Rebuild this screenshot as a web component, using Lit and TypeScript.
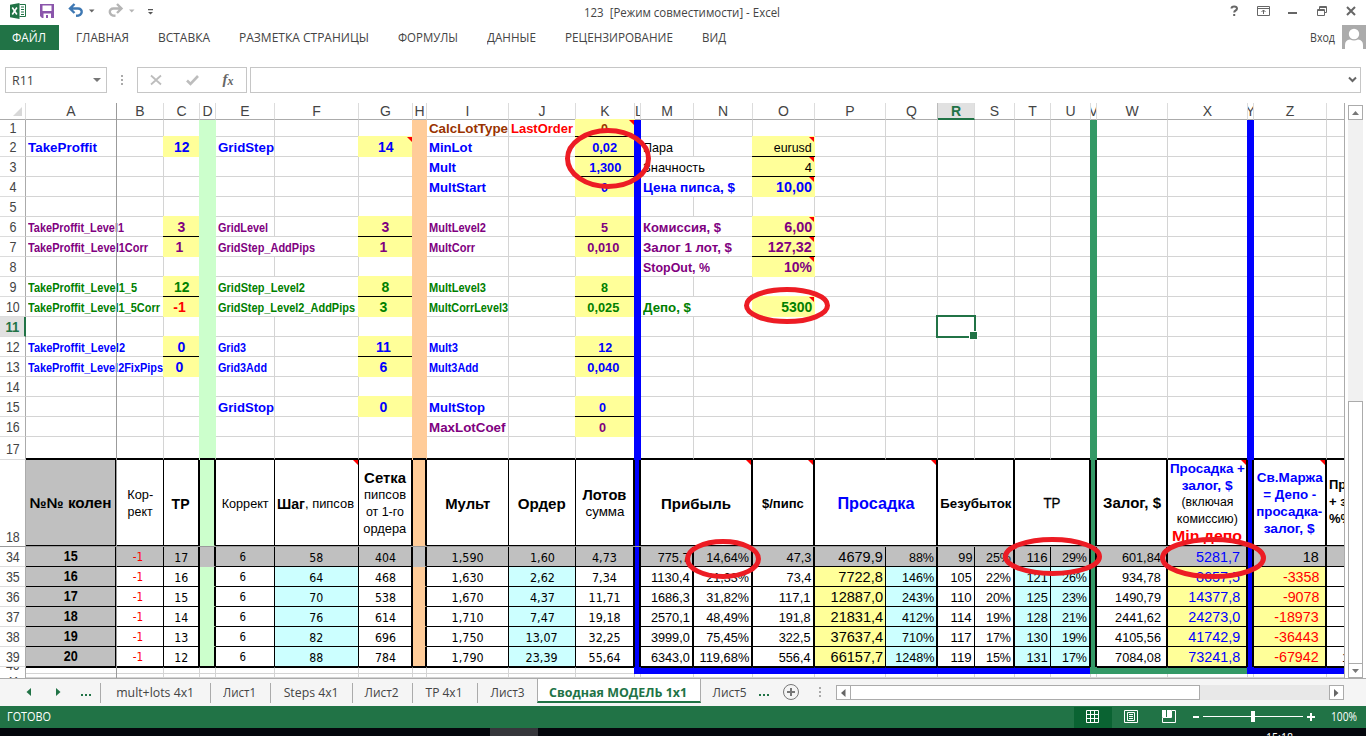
import { LitElement, html, css, nothing } from "lit";
import { customElement } from "lit/decorators.js";

type Cell = { t?: unknown; k?: string; w?: number; span?: number };

const COLS = ["A","B","C","D","E","F","G","H","I","J","K","L","M","N","O","P","Q","R","S","T","U","V","W","X","Y","Z","AA"];
const ROWS = [1,2,3,4,5,6,7,8,9,10,11,12,13,14,15,16,17,18,34,35,36,37,38,39,40,41];
const cells: Record<string, Cell> = {};
const put = (ref: string, t: unknown, k = "", w?: number, span = 1) => { cells[ref] = { t, k, w, span }; };
const fit = (text: string, w?: number, k = "") =>
  w ? html`<span class="fit ${k}" data-w=${w}>${text}</span>` : html`<span class=${k}>${text}</span>`;

/* parameter block */
put("A2", "TakeProffit", "b13 blue", 69);
put("E2", "GridStep", "b13 blue", 56);
put("C2", "12", "b14 ctr blue yel pr1", 15.5);
put("G2", "14", "b14 ctr blue yel note", 15.5);
const small: [string, string, string, number, number][] = [
  ["A6", "TakeProffit_Level1", "pur", 96, 2], ["A7", "TakeProffit_Level1Corr", "pur", 120, 2],
  ["A9", "TakeProffit_Level1_5", "grn", 109, 2], ["A10", "TakeProffit_Level1_5Corr", "grn", 132, 2],
  ["A12", "TakeProffit_Level2", "blue", 97, 2], ["A13", "TakeProffit_Level2FixPips", "blue", 135, 2],
  ["E6", "GridLevel", "pur", 50, 1], ["E7", "GridStep_AddPips", "pur", 97, 2],
  ["E9", "GridStep_Level2", "grn", 87, 2], ["E10", "GridStep_Level2_AddPips", "grn", 137, 2],
  ["E12", "Grid3", "blue", 28, 1], ["E13", "Grid3Add", "blue", 49, 1],
  ["I6", "MultLevel2", "pur", 57, 1], ["I7", "MultCorr", "pur", 46, 1],
  ["I9", "MultLevel3", "grn", 57, 1], ["I10", "MultCorrLevel3", "grn", 79, 1],
  ["I12", "Mult3", "blue", 29, 1], ["I13", "Mult3Add", "blue", 49.5, 1],
];
small.forEach(([r, t, c, w, s]) => put(r, t, "b12 low " + c, w, s));
put("C6", "3", "b14 ctr pur yel bb"); put("C7", "1", "b14 ctr pur yel off");
put("C9", "12", "b14 ctr grn yel bb", 15.5); put("C10", "-1", "b14 ctr red yel off");
put("C12", "0", "b14 ctr blue yel bb"); put("C13", "0", "b14 ctr blue yel off");
put("G6", "3", "b14 ctr pur yel bb"); put("G7", "1", "b14 ctr pur yel off");
put("G9", "8", "b14 ctr grn yel bb"); put("G10", "3", "b14 ctr grn yel off");
put("G12", "11", "b14 ctr blue yel bb off", 15); put("G13", "6", "b14 ctr blue yel off");
put("E15", "GridStop", "b13 blue", 56); put("G15", "0", "b14 ctr blue yel off");
put("I1", "CalcLotType", "b13 brn", 79); put("J1", "LastOrder", "b13 red", 62);
put("I2", "MinLot", "b13 blue", 43); put("I3", "Mult", "b13 blue", 27); put("I4", "MultStart", "b13 blue", 57);
put("I15", "MultStop", "b13 blue", 56); put("I16", "MaxLotCoef", "b13 pur", 76.5);
put("K1", "0", "b13 ctr brn yel bb note", 7);
put("K2", "0,02", "b13 ctr blue yel bb", 25); put("K3", "1,300", "b13 ctr blue yel bb", 32);
put("K4", "0", "b13 ctr blue yel", 7);
put("K6", "5", "b13 ctr pur yel bb", 7); put("K7", "0,010", "b13 ctr pur yel off", 32);
put("K9", "8", "b13 ctr grn yel bb", 7); put("K10", "0,025", "b13 ctr grn yel off", 32);
put("K12", "12", "b13 ctr blue yel bb", 14); put("K13", "0,040", "b13 ctr blue yel off", 32);
put("K15", "0", "b13 ctr blue yel bb off", 7); put("K16", "0", "b13 ctr pur yel off", 7);
put("M2", "Пара", "r13", 30); put("M3", "Значность", "r13", 62, 2);
put("M4", "Цена пипса, $", "b13 blue", 92, 2); put("M6", "Комиссия, $", "b13 pur", 78, 2);
put("M7", "Залог 1 лот, $", "b13 pur", 89, 2); put("M8", "StopOut, %", "b13 pur", 67, 2);
put("M10", "Депо, $", "b13 grn", 48, 2);
put("O2", "eurusd", "r13 rgt yel note bb", 38); put("O3", "4", "r13 rgt yel note bb");
put("O4", "10,00", "b14 rgt blue yel note", 36); put("O6", "6,00", "b14 rgt pur yel note bb", 28);
put("O7", "127,32", "b14 rgt pur yel note bb", 44); put("O8", "10%", "b14 rgt pur yel note", 28);
put("O10", "5300", "b14 rgt grn yel note", 31);

/* table head */
put("A18", "№№ колен", "h b14 ctr gry", 82);
put("B18", html`<div>${fit("Кор-", 26)}</div><div>${fit("рект", 25)}</div>`, "h r13 ctr stack");
put("C18", "ТР", "h b15 ctr", 18);
put("E18", "Коррект", "h r13 ctr", 47);
put("F18", html`<span class="slot step">${fit("Шаг", 28, "b15 lft")}</span><span class="slot">${fit(", пипсов", 49, "lft")}</span>`, "h r13 inl note");
put("G18", html`<div>${fit("Сетка", 42, "b15")}</div><div>${fit("пипсов", 42)}</div><div>${fit("от 1-го", 38)}</div><div>${fit("ордера", 43)}</div>`, "h r13 ctr stack");
put("I18", "Мульт", "h b15 ctr", 45); put("J18", "Ордер", "h b15 ctr", 48);
put("K18", html`<div>${fit("Лотов", 44, "b15")}</div><div>${fit("сумма", 39)}</div>`, "h r13 ctr stack");
put("M18", "Прибыль", "h b15 ctr note", 70, 2);
put("O18", "$/пипс", "h b13 ctr note", 42);
put("P18", "Просадка", "h b16 ctr blue note", 77, 2);
put("R18", "Безубыток", "h b13 ctr", 71, 2);
put("T18", "ТР", "h m14 ctr", 17, 2);
put("W18", "Залог, $", "h b14 ctr", 58);
put("X18", html`<div>${fit("Просадка +", 75, "b13")}</div><div>${fit("залог, $", 51, "b13")}</div><div>${fit("(включая", 52, "r12 blk")}</div><div>${fit("комиссию)", 61, "r12 blk")}</div><div>${fit("Min депо", 70, "b15 red")}</div>`, "h ctr stack blue note high");
put("Z18", html`<div>${fit("Св.Маржа", 66)}</div><div>${fit("= Депо -", 53)}</div><div>${fit("просадка-", 66)}</div><div>${fit("залог, $", 51)}</div>`, "h b13 ctr stack blue note");
put("AA18", html`<div>Пр</div><div>+ з</div><div>%%</div>`, "h b13 stack edge");

/* table body */
const body: [number, string[]][] = [
  [34, ["15","-1","17","","6","58","404","","1,590","1,60","4,73","","775,7","14,64%","47,3","4679,9","88%","99","25%","116","29%","","601,84","5281,7","","18",""]],
  [35, ["16","-1","16","","6","64","468","","1,630","2,62","7,34","","1130,4","21,33%","73,4","7722,8","146%","105","22%","121","26%","","934,78","8657,5","","-3358",""]],
  [36, ["17","-1","15","","6","70","538","","1,670","4,37","11,71","","1686,3","31,82%","117,1","12887,0","243%","110","20%","125","23%","","1490,79","14377,8","","-9078",""]],
  [37, ["18","-1","14","","6","76","614","","1,710","7,47","19,18","","2570,1","48,49%","191,8","21831,4","412%","114","19%","128","21%","","2441,62","24273,0","","-18973",""]],
  [38, ["19","-1","13","","6","82","696","","1,750","13,07","32,25","","3999,0","75,45%","322,5","37637,4","710%","117","17%","130","19%","","4105,56","41742,9","","-36443",""]],
  [39, ["20","-1","12","","6","88","784","","1,790","23,39","55,64","","6343,0","119,68%","556,4","66157,7","1248%","119","15%","131","17%","","7084,08","73241,8","","-67942","1"]],
];
const width = (s: string, d: number, c: number, p = 11) =>
  [...s].reduce((n, ch) => n + (ch === "," ? c : ch === "%" ? p : ch === "-" ? 4.5 : d), 0);
body.forEach(([r, vals]) => vals.forEach((v, i) => {
  const c = COLS[i];
  let k = "", w = 0;
  if ("LVY".includes(c)) { put(c + r, ""); return; }
  if (c === "A") { k = "b14 ctr up"; w = 14; }
  else if (c === "B") { k = "tah12 ctr red offb"; w = 10.5; }
  else if (c === "E") { k = "tah12 ctr off"; w = 6.5; }
  else if (i < 11) { k = "tah13 ctr"; w = width(v, 7, 4); }
  else if (c === "P") { k = "r15 rgt up"; w = width(v, 8.1, 4.1); }
  else if (c === "X") { k = "r15 rgt blue rx up"; w = width(v, 8, 4); }
  else if (c === "Z") { k = "r15 rgt rx up" + (v[0] === "-" ? " red" : ""); w = width(v, 8, 4); }
  else if (c === "W") { k = "r13 rgt rw"; w = width(v, 7.05, 3.6); }
  else if (c === "AA") { k = "r13 rgt rz"; }
  else { k = "r13 rgt"; w = width(v, 7.05, 3.6); }
  if (r === 34 || c === "A") k += " gry";
  else if ("FJQTU".includes(c)) k += " cya";
  else if ("PXZ".includes(c)) k += " yl";
  put(c + r, v, k, v ? w : 0);
}));

const MEDIUM = "A C D G H K L M N O Q S U V W X Y Z".split(" ");

@customElement("app-root")
export class AppRoot extends LitElement {
  static styles = css`
    :host { display: block; width: 1366px; height: 736px; overflow: hidden; background: #fff; color: #444; font: 12px "Open Sans", "Noto Sans", sans-serif; }
    * { box-sizing: border-box; }
    .app { display: flex; flex-direction: column; width: 1366px; height: 736px; position: relative; }
    svg { display: block; flex: none; }
    .fit { display: inline-block; white-space: pre; transform-origin: center; }
    .left, .lft { transform-origin: left; }
    .title { height: 25px; display: grid; grid-template-columns: 584px 1fr 140px; }
    .title .name { padding-top: 4px; line-height: 17px; font-size: 12px; }
    .ribbon { height: 42px; display: flex; align-items: flex-start; font-size: 13px; line-height: 25px; }
    .ribbon .tab { height: 25px; padding-right: 29px; }
    .ribbon .file { width: 59px; background: #217346; color: #fff; padding: 0 0 0 12px; margin-right: 17px; }
    .ribbon .in { margin-left: auto; font-size: 12px; padding-right: 7px; }
    .slot { display: inline-block; white-space: nowrap; flex: none; }
    .slot.step { width: 28px; }
    .fbar { height: 36px; display: flex; padding-left: 5px; }
    .box { height: 26px; border: 1px solid #c6c6c6; background: #fff; display: flex; align-items: center; }
    .nbox { width: 102px; padding: 0 5px 0 6px; justify-content: space-between; }
    .grip { width: 30px; height: 26px; }
    .fx { width: 110px; margin-right: 3px; }
    .inp { width: 1111px; justify-content: flex-end; padding-right: 3px; }
    .mid { display: flex; height: 575px; }
    .sheet { position: relative; width: 1345px; height: 575px; overflow: hidden; border-right: 1px solid #ababab; display: grid;
      grid-template-columns: 26px 91px 47px 36px 16px 59px 84px 54px 14px 82px 67px 59px 6px 53px 59px 62px 71px 52px 37px 40px 36px 40px 6px 71px 80px 6px 73px 18px;
      grid-template-rows: 17px 17px repeat(15, 20px) 23px 87px repeat(6, 20px) 7px 4px;
      font-family: "Liberation Sans", Arial, sans-serif; color: #000; }
    .ch { font-size: 14px; line-height: 17px; color: #444; text-align: center; overflow: hidden; border-bottom: 1px solid #ababab; border-right: 1px solid #dcdcdc; display: flex; justify-content: center; }
    .ch.sel { background: #e1e1e1; color: #217346; font-weight: bold; border-bottom: 2px solid #217346; box-shadow: -1px 0 #bbb; }
    .ch.thin { justify-content: flex-start; }
    .corner { border-bottom: 1px solid #ababab; border-right: 1px solid #dcdcdc; display: flex; align-items: flex-end; justify-content: flex-end; padding: 0 3px 3px 0; }
    .rh { font-size: 14px; color: #444; display: flex; align-items: flex-end; justify-content: center; overflow: hidden; border-right: 1px solid #ababab; border-bottom: 1px solid #dcdcdc; line-height: 17px; }
    .rh .fit { flex: none; }
    .rh.row-1 { line-height: 15px; }
    .rh.row-17 { padding-bottom: 1px; }
    .rh.sel { background: #e1e1e1; color: #217346; font-weight: bold; border-right: 2px solid #217346; }
    .rh.row-40 { border-bottom: 0; }
    .rh.row-41 { align-items: flex-start; line-height: 16px; border-bottom: 0; }
    .c { position: relative; border-right: 1px solid #d4d4d4; border-bottom: 1px solid #d4d4d4; display: flex; align-items: center; white-space: nowrap; padding: 2px 2px 0 2px; min-width: 0; line-height: 17px; }
    .c .fit { flex: none; }
    .c.row-1 { padding-top: 0; }
    .c.low { padding-top: 3px; }
    .c.up { padding-top: 0; }
    .c.ctr { justify-content: center; padding-left: 0; padding-right: 0; }
    .c.rgt { justify-content: flex-end; }
    .c.rgt .fit { transform-origin: right; }
    .c.ctr .fit { transform-origin: center; }
    .c.off { padding-right: 4px; }
    .c.offb { padding-right: 5px; }
    .c.rx { padding-right: 6px; }
    .c.rw { padding-right: 5px; }
    .c.rz { padding-right: 0; overflow: hidden; justify-content: flex-start; padding-left: 15px; }
    .b12 { font-weight: bold; font-size: 12px; } .b13 { font-weight: bold; font-size: 13px; }
    .b14 { font-weight: bold; font-size: 14px; } .b15 { font-weight: bold; font-size: 15px; } .b16 { font-weight: bold; font-size: 16px; }
    .r12 { font-size: 12px; font-weight: normal; } .r13 { font-size: 13px; } .r15 { font-size: 15px; }
    .m14 { font-size: 14px; -webkit-text-stroke: 0.3px #000; }
    .tah12 { font-family: "DejaVu Sans", sans-serif; font-size: 12px; } .tah13 { font-family: "DejaVu Sans", sans-serif; font-size: 13px; }
    .blue { color: #0000ff; } .pur { color: #800080; } .grn { color: #008000; } .red { color: #ff0000; } .brn { color: #993300; } .blk { color: #000; }
    .yel { background: #ffff99; border-color: #ffff99; box-shadow: -1px 0 #ffff99, 0 -1px #ffff99, -1px -1px #ffff99; }
    .yel.under { box-shadow: -1px 0 #ffff99; }
    .bb { z-index: 1; }
    .bb::after { content: ""; position: absolute; left: -1px; right: -1px; bottom: -1px; height: 1px; background: #000; }
    .note::before { content: ""; position: absolute; top: 0; right: 0; width: 5px; height: 5px; background: #f00; clip-path: polygon(0 0, 100% 0, 100% 100%); }
    .c.sD, .c.sH, .c.sL, .c.sV, .c.sY { z-index: 2; }
    .c.sD { background: #ccffcc; border-color: #ccffcc; box-shadow: -1px 0 #ccffcc; padding: 0; }
    .c.sH { background: #ffcc99; border-color: #ffcc99; box-shadow: -1px 0 #ffcc99; padding: 0; }
    .c.sL, .c.sY { background: #0000ff; border-color: #0000ff; box-shadow: -1px 0 #0000ff; padding: 0; }
    .c.sV { background: #339966; border-color: #339966; box-shadow: -1px 0 #339966; padding: 0; }
    .c.t { border-right-color: #000; border-bottom-color: #000; box-shadow: none; }
    .c.t.med { border-right-width: 2px; }
    .c.t.sD { border-bottom-color: #ccffcc; } .c.t.sH { border-bottom-color: #ffcc99; }
    .c.t.sL, .c.t.sY, .c.t.sV { border-bottom: 0; }
    .c.row-17 { border-bottom: 2px solid #000; }
    .c.row-17.sL, .c.row-17.sY { border-bottom-color: #0000ff; } .c.row-17.sV { border-bottom-color: #339966; }
    .c.row-18 { border-bottom: 2px solid #000; }
    .c.row-39.sD, .c.row-39.sH { border-bottom-color: #000; }
    .c.gry { background: #c0c0c0; } .c.cya { background: #ccffff; } .c.yl { background: #ffff99; }
    .c.row-34.sD, .c.row-34.sH { background: #c0c0c0; border-bottom-color: #c0c0c0; }
    .c.row-40 { border-top: 1px solid #000; padding: 0; }
    .c.row-40.fillb { background: #0000ff; border-right-color: #0000ff; border-bottom-color: #0000ff; }
    .c.row-40.fillg { background: #339966; border-right-color: #339966; border-bottom-color: #339966; }
    .c.row-40.sL, .c.row-40.sY { border-top-color: #0000ff; } .c.row-40.sV { border-top-color: #339966; }
    .c.row-40.sD, .c.row-40.sH, .c.row-41 { background: #fff; border-color: #d4d4d4; box-shadow: none; padding: 0; }
    .c.row-40.sD, .c.row-40.sH { border-top-color: #000; }
    .stack { flex-direction: column; justify-content: center; align-items: center; overflow: hidden; }
    .c.stack { padding-top: 1px; }
    .stack div { height: 17px; line-height: 17px; display: flex; justify-content: center; flex: none; }
    .c.stack.high { justify-content: flex-start; padding-top: 0; }
    .high div:last-child { line-height: 16px; }
    .c.stack.edge { align-items: flex-start; padding: 0 0 2px 2px; }
    .h.inl { padding-left: 2px; align-items: center; }
    .c.inl .fit { transform-origin: left; }
    .line { position: absolute; background: #9b9b9b; z-index: 3; }
    .vf { left: 116px; top: 0; width: 1px; height: 575px; }
    .hf { left: 0; top: 443px; width: 1345px; height: 1px; }
    .cursor { position: absolute; left: 936px; top: 212px; width: 40px; height: 23px; border: 2px solid #217346; z-index: 3; }
    .cursor::after { content: ""; position: absolute; right: -4px; bottom: -4px; width: 7px; height: 7px; background: #217346; border: 1px solid #fff; }
    .marks { position: absolute; left: 0; top: 0; z-index: 5; pointer-events: none; }
    .vs { width: 21px; display: flex; flex-direction: column; padding: 2px 3px 0 3px; }
    .btn { width: 15px; height: 15px; border: 1px solid #ababab; background: #fff; display: flex; align-items: center; justify-content: center; flex: none; }
    .vtrack { flex: 1; background: #f1f1f1; display: flex; flex-direction: column; justify-content: flex-end; }
    .vthumb { height: 262px; background: #fff; border: 1px solid #ababab; border-bottom: 0; }
    .tabs { height: 28px; border-top: 1px solid #ababab; background: #f5f5f5; display: flex; font-size: 13px; line-height: 26px; color: #444; }
    .nav { width: 101px; display: flex; }
    .st { display: flex; justify-content: center; position: relative; }
    .st.sep { padding-right: 2px; }
    .st.sep::after { content: ""; position: absolute; right: 0; top: 4px; height: 20px; width: 1px; background: #ababab; }
    .st.on { background: #fff; border: 1px solid #ababab; border-top: 0; border-bottom: 2px solid #217346; height: 24px; color: #217346; font-weight: bold; padding-right: 2px; }
    .hs { display: flex; margin-top: 6px; height: 15px; width: 508px; background: #e8e8e8; }
    .hthumb { width: 350px; height: 15px; background: #fff; border: 1px solid #ababab; margin-left: -1px; }
    .grow { flex: 1; }
    .status { height: 22px; background: #217346; color: #fff; display: flex; line-height: 22px; padding-left: 7px; }
    .task { height: 8px; background: #04060c; color: #fff; overflow: hidden; display: flex; }
    .task .run { margin-left: 490px; width: 48px; background: #35363b; }
    .task .clock { margin-left: 728px; padding-top: 4px; font-size: 12px; line-height: 12px; }
  `;

  async firstUpdated() {
    await document.fonts.ready;
    this.renderRoot.querySelectorAll<HTMLElement>("[data-w]").forEach((el) => {
      const target = Number(el.dataset.w);
      const natural = el.getBoundingClientRect().width;
      if (natural) el.style.transform = `scaleX(${(target / natural).toFixed(4)})`;
    });
  }

  label(text: string, w: number, gap = 0) {
    return html`<span class="slot" style="width:${w + gap}px"><span class="fit left" data-w=${w}>${text}</span></span>`;
  }

  cell(col: string, row: number) {
    const c = cells[col + row] ?? {};
    const k = ["c", c.k ?? "", "row-" + row];
    if ("DHLVY".includes(col)) k.push("s" + col);
    if (cells[col + (row - 1)]?.k?.includes("bb")) k.push("under");
    if (row >= 18 && row <= 39) {
      k.push("t");
      const last = COLS[COLS.indexOf(col) + (c.span ?? 1) - 1];
      if (MEDIUM.includes(last)) k.push("med");
    }
    if (row === 40) {
      const i = COLS.indexOf(col);
      if ((i >= 11 && i <= 20) || i >= 24) k.push("fillb");
      else if (i >= 21) k.push("fillg");
    }
    const inner = typeof c.t === "string" ? (c.w ? html`<span class="fit left" data-w=${c.w}>${c.t}</span>` : c.t) : c.t ?? nothing;
    return html`<div class=${k.join(" ")} style="grid-column:span ${c.span ?? 1}">${inner}</div>`;
  }

  row(r: number) {
    const out = [html`<div class="rh row-${r} ${r === 11 ? "sel" : ""}"><span class="fit" data-w=${r > 9 ? 13.8 : 7}>${r}</span></div>`];
    for (let i = 0; i < COLS.length; i++) {
      out.push(this.cell(COLS[i], r));
      i += (cells[COLS[i] + r]?.span ?? 1) - 1;
    }
    return out;
  }

  tab(text: string, w: number, fitw: number, k = "sep") {
    return html`<div class="st ${k}" style="width:${w}px"><span class="fit" data-w=${fitw}>${text}</span></div>`;
  }

  render() {
    return html`<div class="app">
      <div class="title">
        <svg width="584" height="25" viewBox="0 0 584 25">
          <path fill="#217346" d="M10 4.8 19.5 3v16L10 17.2z"/><path fill="none" stroke="#217346" d="M19.5 4.5h6v12h-6M21 7h3M21 9.5h3M21 12h3M21 14.5h3"/>
          <path stroke="#fff" stroke-width="1.6" d="M12.3 7.5l4.6 7M16.9 7.5l-4.6 7" fill="none"/>
          <path fill="#8a55ab" d="M40 4h14v14H42l-2-2z"/><path fill="#fff" d="M42.5 5.5h9v5.5h-9zM43.5 13.5h7.500V18h-3v-3h-2v3h-2.500z"/>
          <path fill="none" stroke="#3e78b3" stroke-width="2.4" d="M70.5 8.5h7.5c5 0 5.500 7-2 7.300M74.500 4l-4.500 4.500 4.500 4.500"/>
          <path fill="#666" d="M89 9.500h5.500l-2.750 3z"/>
          <path fill="none" stroke="#b5b5b5" stroke-width="2.400" d="M121 8.500h-7.500c-5 0-5.500 7 2 7.300M117 4l4.500 4.500-4.500 4.500"/>
          <path fill="#b5b5b5" d="M129 9.500h5.500l-2.750 3z"/>
          <path fill="#555" d="M148 9h5v1.200h-5zM148 12h5l-2.500 2.500z"/>
        </svg>
        <div class="name">${this.label("123  [Режим совместимости] - Excel", 196)}</div>
        <svg width="140" height="25" viewBox="1226 0 140 25" fill="none" stroke="#666">
          <path stroke-width="2" d="M1231.500 8.500q0-2 2.700-2t2.800 2q0 1.300-1.400 2t-1.400 2M1234.200 14v2"/>
          <path d="M1257.500 6.500h12v9h-12zM1257.500 8.500h12M1263.500 14v-4M1261.500 12l2-2 2 2"/>
          <path stroke-width="2" d="M1288 13h9"/>
          <path d="M1317.500 9.500h7v6h-7zM1319.500 9v-2.500h7v6H1325M1317.500 10.500h7M1319.500 7.500h7"/>
          <path stroke-width="2" d="M1347 7l8 8M1355 7l-8 8"/>
        </svg>
      </div>
      <div class="ribbon">
        <div class="tab file">${this.label("ФАЙЛ", 34)}</div>
        ${this.label("ГЛАВНАЯ", 53, 29)}${this.label("ВСТАВКА", 52, 29)}${this.label("РАЗМЕТКА СТРАНИЦЫ", 130, 29)}${this.label("ФОРМУЛЫ", 60, 29)}${this.label("ДАННЫЕ", 49, 29)}${this.label("РЕЦЕНЗИРОВАНИЕ", 108, 29)}${this.label("ВИД", 24)}
        <div class="in">${this.label("Вход", 25)}</div>
        <svg width="24" height="24" viewBox="0 0 24 24"><path fill="#ababab" d="M0 0h24v24H0z"/><circle cx="12" cy="9" r="5.200" fill="#fff"/><path fill="#fff" d="M3 24v-4q0-5 5-5.500q4 2 8 0q5 .5 5 5.500v4z"/></svg>
      </div>
      <div class="fbar">
        <div class="box nbox">${this.label("R11", 22)}<svg width="8" height="5"><path fill="#777" d="M0 0h8L4 4z"/></svg></div>
        <svg class="grip" viewBox="0 0 30 26"><path fill="#aaa" d="M14 8h2v2h-2zM14 12h2v2h-2zM14 16h2v2h-2z"/></svg>
        <div class="box fx"><svg width="108" height="24" viewBox="138 68 108 24" fill="none">
          <path stroke="#bdbdbd" stroke-width="1.800" d="M151 75.500l10 9M161 75.500l-10 9"/><path stroke="#bdbdbd" stroke-width="2.600" d="M187 80.500l3.500 3.500 7.500-8"/>
          <text x="222.500" y="84" font-family="Liberation Serif" font-style="italic" font-weight="bold" font-size="15" fill="#666">f</text><text x="227.500" y="84.500" font-family="Liberation Serif" font-style="italic" font-weight="bold" font-size="12" fill="#666">x</text></svg></div>
        <div class="box inp"><svg width="9" height="8"><path fill="none" stroke="#666" stroke-width="2" d="M1 1.500l3.500 3.500L8 1.500"/></svg></div>
      </div>
      <div class="mid">
        <div class="sheet">
          <div class="corner"><svg width="9" height="9"><path fill="#d8d8d8" d="M9 0v9H0z"/></svg></div>
          ${COLS.map((c) => html`<div class="ch ${c === "R" ? "sel" : ""} ${c === "L" ? "thin" : ""}">${c === "AA" ? "" : c}</div>`)}
          ${ROWS.map((r) => this.row(r))}
          <div class="line vf"></div><div class="line hf"></div><div class="cursor"></div>
        </div>
        <div class="vs">
          <div class="btn"><svg width="7" height="4"><path fill="#777" d="M0 4h7L3.500 0z"/></svg></div>
          <div class="vtrack"><div class="vthumb"></div></div>
          <div class="btn"><svg width="7" height="4"><path fill="#777" d="M0 0h7L3.500 4z"/></svg></div>
        </div>
      </div>
      <div class="tabs">
        <div class="nav"><svg width="101" height="27"><path fill="#217346" d="M31 9v8l-4.500-4zM56 9v8l4.500-4zM81 15h2v2h-2zM85 15h2v2h-2zM89 15h2v2h-2z"/><path stroke="#ababab" d="M100.500 4v20"/></svg></div>
        ${this.tab("mult+lots 4x1", 110, 78)}${this.tab("Лист1", 60, 33)}${this.tab("Steps 4x1", 82, 55)}${this.tab("Лист2", 60, 34)}${this.tab("TP 4x1", 65, 37)}${this.tab("Лист3", 59, 34, "")}
        ${this.tab("Сводная МОДЕЛЬ 1x1", 164, 138, "on")}${this.tab("Лист5", 58, 34, "")}
        <svg width="77" height="27" viewBox="759 679 77 27" fill="none"><path fill="#217346" d="M759 694h2v2h-2zM763 694h2v2h-2zM767 694h2v2h-2z"/><circle cx="791" cy="692" r="7.500" stroke="#777"/><path stroke="#777" stroke-width="2" d="M787 692h8M791 688v8"/><path fill="#aaa" d="M819 687h2v2h-2zM819 691h2v2h-2zM819 695h2v2h-2z"/></svg>
        <div class="hs"><div class="btn"><svg width="5" height="8"><path fill="#666" d="M4.500 0v8L0 4z"/></svg></div><div class="hthumb"></div><div class="grow"></div><div class="btn"><svg width="5" height="8"><path fill="#666" d="M0 0v8l4.500-4z"/></svg></div></div>
      </div>
      <div class="status">
        ${this.label("ГОТОВО", 44)}<div class="grow"></div>
        <svg width="257" height="22" viewBox="1074 706 257 22" fill="none" stroke="#fff"><path fill="#0a6332" stroke="none" d="M1074 707h38v21h-38z"/>
          <path d="M1086.500 710.500h12v12h-12zM1090.500 710v13M1094.500 710v13M1086 714.500h13M1086 718.500h13"/>
          <path d="M1124.500 710.500h13v12h-13zM1127.500 712.500h7v8h-7zM1129 714.500h4M1129 716.500h4M1129 718.500h4"/>
          <path fill="#fff" stroke="none" d="M1162 710h4v7h-4zM1167 710h4v7h-4z"/><path d="M1171.500 710.500h4v12h-13v-5h9z"/>
          <path stroke-width="2" d="M1193 717h6M1307 717h8M1311 713v8"/><path d="M1203 716.500h100"/><path fill="#fff" stroke="none" d="M1251 711h4v11h-4z"/></svg>
        ${this.label("100%", 26, 9)}
      </div>
      <div class="task"><div class="run"></div><div class="clock">${this.label("15:18", 27)}</div></div>
      <svg class="marks" width="1366" height="736" fill="none" stroke="#ed1c24" stroke-width="5">
        <ellipse cx="608" cy="158.500" rx="40.500" ry="28"/><ellipse cx="787" cy="305.500" rx="40.500" ry="16"/><ellipse cx="723" cy="559" rx="35.500" ry="17.500"/><ellipse cx="1052.500" cy="556.500" rx="47" ry="17"/><ellipse cx="1213" cy="558" rx="50.500" ry="18.500"/>
      </svg>
    </div>`;
  }
}
